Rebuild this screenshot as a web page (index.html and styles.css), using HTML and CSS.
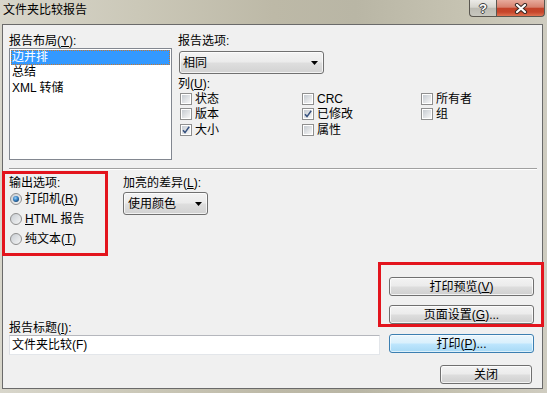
FILE: index.html
```html
<!DOCTYPE html>
<html lang="zh-CN">
<head>
<meta charset="utf-8">
<title>文件夹比较报告</title>
<link rel="stylesheet" href="styles.css">
</head>
<body>
<svg class="defs" aria-hidden="true">
  <defs>
    <linearGradient id="boxg" x1="0" y1="0" x2="1" y2="1">
      <stop offset="0" stop-color="#c6cbd1"/>
      <stop offset="1" stop-color="#f7f7f7"/>
    </linearGradient>
    <radialGradient id="dotg" cx="0.4" cy="0.35" r="0.7">
      <stop offset="0" stop-color="#9fd0f5"/>
      <stop offset="0.5" stop-color="#3a86c8"/>
      <stop offset="1" stop-color="#17426e"/>
    </radialGradient>
  </defs>
</svg>
<div class="window">
  <div class="titlebar">
    <span class="title">文件夹比较报告</span>
    <div class="caption">
      <div class="cap help"><span class="qmark">?</span></div>
      <div class="cap close">
        <svg width="14" height="11" viewBox="0 0 14 11"><path d="M3 2 L11 9 M11 2 L3 9" stroke="#3a2a26" stroke-width="4.2" stroke-linecap="round"/><path d="M3 2 L11 9 M11 2 L3 9" stroke="#fff" stroke-width="2.2" stroke-linecap="round"/></svg>
      </div>
    </div>
  </div>

  <div class="client">
    <div class="top">
      <div class="layout-col">
        <div class="label">报告布局(<u>Y</u>):</div>
        <div class="listbox">
          <div class="item sel">边并排</div>
          <div class="item">总结</div>
          <div class="item">XML 转储</div>
        </div>
      </div>
      <div class="options-col">
        <div class="label">报告选项:</div>
        <div class="combo combo-wide"><span>相同</span><svg class="arrow" width="7" height="4" viewBox="0 0 7 4"><path d="M0 0 H7 L3.5 4 Z" fill="#000"/></svg></div>
        <div class="label cols-label">列(<u>U</u>):</div>
        <div class="checks">
          <div class="check"><svg viewBox="0 0 12 12"><rect x=".5" y=".5" width="11" height="11" fill="#fff" stroke="#8f8f8f"/><rect x="2" y="2" width="8" height="8" fill="url(#boxg)"/></svg><span>状态</span></div>
          <div class="check"><svg viewBox="0 0 12 12"><rect x=".5" y=".5" width="11" height="11" fill="#fff" stroke="#8f8f8f"/><rect x="2" y="2" width="8" height="8" fill="url(#boxg)"/></svg><span>CRC</span></div>
          <div class="check"><svg viewBox="0 0 12 12"><rect x=".5" y=".5" width="11" height="11" fill="#fff" stroke="#8f8f8f"/><rect x="2" y="2" width="8" height="8" fill="url(#boxg)"/></svg><span>所有者</span></div>
          <div class="check"><svg viewBox="0 0 12 12"><rect x=".5" y=".5" width="11" height="11" fill="#fff" stroke="#8f8f8f"/><rect x="2" y="2" width="8" height="8" fill="url(#boxg)"/></svg><span>版本</span></div>
          <div class="check"><svg viewBox="0 0 12 12"><rect x=".5" y=".5" width="11" height="11" fill="#fff" stroke="#8f8f8f"/><rect x="2" y="2" width="8" height="8" fill="url(#boxg)"/><path d="M3 6.2 L5 8.6 L9.2 2.8" fill="none" stroke="#35507e" stroke-width="1.5"/></svg><span>已修改</span></div>
          <div class="check"><svg viewBox="0 0 12 12"><rect x=".5" y=".5" width="11" height="11" fill="#fff" stroke="#8f8f8f"/><rect x="2" y="2" width="8" height="8" fill="url(#boxg)"/></svg><span>组</span></div>
          <div class="check"><svg viewBox="0 0 12 12"><rect x=".5" y=".5" width="11" height="11" fill="#fff" stroke="#8f8f8f"/><rect x="2" y="2" width="8" height="8" fill="url(#boxg)"/><path d="M3 6.2 L5 8.6 L9.2 2.8" fill="none" stroke="#35507e" stroke-width="1.5"/></svg><span>大小</span></div>
          <div class="check"><svg viewBox="0 0 12 12"><rect x=".5" y=".5" width="11" height="11" fill="#fff" stroke="#8f8f8f"/><rect x="2" y="2" width="8" height="8" fill="url(#boxg)"/></svg><span>属性</span></div>
        </div>
      </div>
    </div>

    <div class="sep"></div>

    <div class="bottom">
      <div class="left">
        <div class="groups">
          <div class="output">
            <div class="label glabel">输出选项:</div>
            <div class="radio"><svg viewBox="0 0 12 12"><circle cx="6" cy="6" r="5.5" fill="url(#boxg)" stroke="#8f8f8f"/><circle cx="6" cy="6" r="3" fill="url(#dotg)"/></svg><span>打印机(<u>R</u>)</span></div>
            <div class="radio"><svg viewBox="0 0 12 12"><circle cx="6" cy="6" r="5.5" fill="url(#boxg)" stroke="#8f8f8f"/></svg><span><u>H</u>TML 报告</span></div>
            <div class="radio"><svg viewBox="0 0 12 12"><circle cx="6" cy="6" r="5.5" fill="url(#boxg)" stroke="#8f8f8f"/></svg><span>纯文本(<u>T</u>)</span></div>
          </div>
          <div class="highlight">
            <div class="label glabel">加亮的差异(<u>L</u>):</div>
            <div class="combo combo-small"><span>使用颜色</span><svg class="arrow" width="7" height="4" viewBox="0 0 7 4"><path d="M0 0 H7 L3.5 4 Z" fill="#000"/></svg></div>
          </div>
        </div>
        <div class="title-field">
          <div class="label">报告标题(<u>I</u>):</div>
          <div class="textbox">文件夹比较(F)</div>
        </div>
      </div>
      <div class="right">
        <button class="btn btn-preview"><span>打印预览(<u>V</u>)</span></button>
        <button class="btn btn-setup"><span>页面设置(<u>G</u>)...</span></button>
        <button class="btn btn-default btn-print"><span>打印(<u>P</u>)...</span></button>
        <button class="btn btn-close"><span>关闭</span></button>
      </div>
    </div>
  </div>

  <div class="mark mark-output"></div>
  <div class="mark mark-buttons"></div>
</div>
</body>
</html>
```

FILE: styles.css
```css
* { box-sizing: border-box; }
html, body { margin: 0; padding: 0; }
body {
  font-family: "Liberation Sans", "Noto Sans CJK SC", sans-serif;
  font-size: 12px;
  line-height: 14px;
  color: #000;
  background: #cac7b6;
}
.defs { display: block; width: 0; height: 0; overflow: hidden; }

.window {
  position: relative;
  width: 547px;
  height: 393px;
  overflow: hidden;
  display: flex;
  flex-direction: column;
  background: linear-gradient(to right, #d8d6cb 0%, #cbc8b8 25%, #bdb9a7 50%, #b9b6a5 65%, #c6c3b2 85%, #cfccc0 100%);
}

/* title bar */
.titlebar {
  height: 24px;
  flex: none;
  display: flex;
  align-items: flex-start;
  padding-left: 3px;
}
.title { padding-top: 3px; line-height: 14px; color: #000; }
.caption { margin-left: auto; margin-right: 2px; display: flex; }
.cap {
  height: 17px;
  display: flex;
  align-items: center;
  justify-content: center;
  border: 1px solid #5a5750;
  border-top: none;
}
.help {
  width: 27px;
  border-right: none;
  border-radius: 0 0 0 4px;
  background: linear-gradient(#ecebe7, #d6d5ce 45%, #bcbbb3 52%, #c8c7bf 100%);
}
.qmark {
  font: bold 13px/13px "Liberation Sans", sans-serif;
  color: #fff;
  text-shadow: 0 0 1px #333, 1px 0 0 #444, -1px 0 0 #444, 0 1px 0 #444, 0 -1px 0 #444;
}
.close {
  width: 49px;
  border-radius: 0 0 4px 0;
  background: linear-gradient(#e7ab9d, #d7816e 45%, #c3432a 52%, #c6452b 75%, #df7352 100%);
}

/* client area */
.client {
  margin-left: 2px;
  width: 541px;
  height: 365px;
  flex: none;
  border: 1px solid #6a6a6a;
  background: #f0f0f0;
  display: flex;
  flex-direction: column;
}

.label { white-space: nowrap; }

.top { display: flex; padding: 9px 0 0 6px; }
.layout-col { width: 163px; }
.listbox {
  height: 112px;
  border: 1px solid #828790;
  background: #fff;
  padding: 1px;
}
.item { height: 15.4px; line-height: 15px; padding-left: 1px; white-space: nowrap; }
.item.sel {
  background: #3399ff;
  color: #fff;
  outline: 1px dotted #c6772f;
  outline-offset: -1px;
}

.options-col { margin-left: 6px; flex: 1; }
.combo {
  display: flex;
  align-items: center;
  justify-content: space-between;
  height: 23px;
  border: 1px solid #707070;
  border-radius: 3px;
  background: linear-gradient(#f3f3f3 0%, #ebebeb 48%, #dedede 52%, #d2d2d2 100%);
  box-shadow: inset 0 0 0 1px rgba(255,255,255,0.7);
  padding: 0 5px 0 3px;
  white-space: nowrap;
}
.arrow { flex: none; }
.combo-wide { width: 145px; margin: 3px 0 0 1px; }
.cols-label { margin-top: 4px; line-height: 13px; }
.checks {
  display: grid;
  grid-template-columns: 122px 119px auto;
  grid-auto-rows: 15.5px;
  margin-left: 2px;
}
.check { display: flex; align-items: center; gap: 3px; white-space: nowrap; }
.check svg { width: 12px; height: 12px; flex: none; }

.sep {
  margin: 8px 5px 0 6px;
  border-top: 1px solid #a0a0a0;
  border-bottom: 1px solid #ffffff;
}

.bottom { flex: 1; display: flex; padding: 0 8px 0 6px; }
.left { width: 371px; display: flex; flex-direction: column; }
.groups { display: flex; padding-top: 7px; }
.glabel { line-height: 12px; }
.output { width: 114px; }
.radio { height: 20px; display: flex; align-items: center; gap: 3px; padding-left: 1px; white-space: nowrap; }
.radio svg { width: 12px; height: 12px; flex: none; }
.combo-small { width: 85px; margin-top: 3px; padding-left: 4px; }

.title-field { margin-top: auto; padding-bottom: 33px; }
.textbox {
  height: 20px;
  border: 1px solid;
  border-color: #b5b7bd #e3e6ea #e3e6ea #dcdee3;
  background: #fff;
  padding-left: 2px;
  line-height: 18px;
  white-space: nowrap;
}

.right {
  margin-left: 9px;
  width: 145px;
  display: flex;
  flex-direction: column;
  justify-content: flex-end;
  padding-bottom: 4px;
}
.btn {
  display: flex;
  align-items: center;
  justify-content: center;
  height: 19px;
  width: 145px;
  margin: 0;
  padding: 0;
  font: inherit;
  line-height: 14px;
  color: #000;
  border: 1px solid #707070;
  border-radius: 3px;
  background: linear-gradient(#f3f3f3 0%, #ebebeb 48%, #dddddd 52%, #cfcfcf 100%);
  box-shadow: inset 0 0 0 1px rgba(255,255,255,0.75);
}
.btn-default {
  border-color: #3c7fb1;
  background: linear-gradient(#eaf6fd 0%, #d9f0fc 48%, #bee6fd 52%, #a7d9f5 100%);
  box-shadow: inset 0 0 0 1px rgba(255,255,255,0.6);
}
.btn-preview { margin-bottom: 9px; }
.btn-setup { margin-bottom: 10px; }
.btn-print { margin-bottom: 12px; }
.btn-close { width: 92px; align-self: flex-end; margin-right: 2px; }

/* red annotation rectangles drawn over the dialog */
.mark {
  position: absolute;
  border: 3px solid #e3141d;
  pointer-events: none;
}
.mark-output { left: 2px; top: 171px; width: 106px; height: 85px; }
.mark-buttons { left: 378px; top: 262px; width: 166px; height: 65px; }
```
